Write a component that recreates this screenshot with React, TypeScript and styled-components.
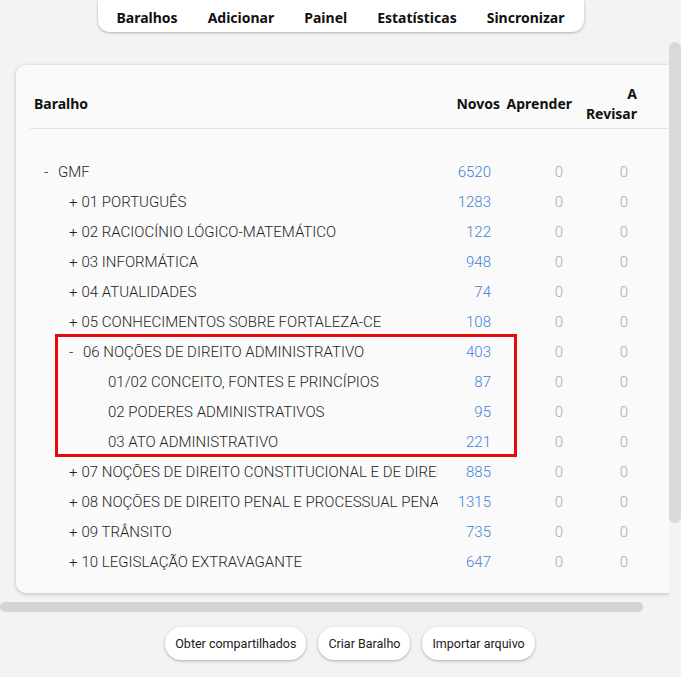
import React from "react";
import styled, { createGlobalStyle } from "styled-components";

type Deck = {
  name: string;
  depth: number;
  expander?: "+" | "-";
  novos: number;
  aprender: number;
  revisar: number;
};

const decks: Deck[] = [
  { name: "GMF", depth: 0, expander: "-", novos: 6520, aprender: 0, revisar: 0 },
  { name: "01 PORTUGUÊS", depth: 1, expander: "+", novos: 1283, aprender: 0, revisar: 0 },
  { name: "02 RACIOCÍNIO LÓGICO-MATEMÁTICO", depth: 1, expander: "+", novos: 122, aprender: 0, revisar: 0 },
  { name: "03 INFORMÁTICA", depth: 1, expander: "+", novos: 948, aprender: 0, revisar: 0 },
  { name: "04 ATUALIDADES", depth: 1, expander: "+", novos: 74, aprender: 0, revisar: 0 },
  { name: "05 CONHECIMENTOS SOBRE FORTALEZA-CE", depth: 1, expander: "+", novos: 108, aprender: 0, revisar: 0 },
];

const highlighted: Deck[] = [
  { name: "06 NOÇÕES DE DIREITO ADMINISTRATIVO", depth: 1, expander: "-", novos: 403, aprender: 0, revisar: 0 },
  { name: "01/02 CONCEITO, FONTES E PRINCÍPIOS", depth: 2, novos: 87, aprender: 0, revisar: 0 },
  { name: "02 PODERES ADMINISTRATIVOS", depth: 2, novos: 95, aprender: 0, revisar: 0 },
  { name: "03 ATO ADMINISTRATIVO", depth: 2, novos: 221, aprender: 0, revisar: 0 },
];

const rest: Deck[] = [
  { name: "07 NOÇÕES DE DIREITO CONSTITUCIONAL E DE DIREITOS HUMANOS", depth: 1, expander: "+", novos: 885, aprender: 0, revisar: 0 },
  { name: "08 NOÇÕES DE DIREITO PENAL E PROCESSUAL PENAL", depth: 1, expander: "+", novos: 1315, aprender: 0, revisar: 0 },
  { name: "09 TRÂNSITO", depth: 1, expander: "+", novos: 735, aprender: 0, revisar: 0 },
  { name: "10 LEGISLAÇÃO EXTRAVAGANTE", depth: 1, expander: "+", novos: 647, aprender: 0, revisar: 0 },
];

const GlobalStyle = createGlobalStyle`
  html, body {
    margin: 0;
    padding: 0;
    height: 100%;
    overflow: hidden;
    background: #f3f3f3;
  }
  body {
    font-family: "Noto Sans", "Liberation Sans", sans-serif;
    color: #1a1a1a;
  }
`;

const Page = styled.div`
  display: flex;
  height: 100vh;
  overflow: hidden;
`;

const Main = styled.main`
  flex: 1;
  min-width: 0;
  display: flex;
  flex-direction: column;
  overflow: hidden;
`;

// the window's vertical scrollbar, drawn (the browser hides real ones)
const ScrollRail = styled.div`
  width: 12px;
  flex-shrink: 0;
`;

const RailThumb = styled.div`
  margin-top: 42px;
  height: 481px;
  border-radius: 6px;
  background: #d9d9d9;
`;

const Nav = styled.nav`
  align-self: center;
  display: flex;
  align-items: center;
  gap: 30px;
  height: 32px;
  padding: 2px 19px 0;
  margin-left: 12px;
  box-sizing: border-box;
  background: #ffffff;
  border-radius: 0 0 12px 12px;
  box-shadow: 0 1px 3px rgba(0, 0, 0, 0.28);
`;

const NavItem = styled.a`
  font-weight: 700;
  font-size: 14px;
  color: #111;
  text-decoration: none;
  white-space: nowrap;
`;

const DeckArea = styled.div`
  margin-top: 25px;
  padding: 8px 0 5px 16px;
  overflow: hidden;
`;

const Card = styled.div`
  width: 680px;
  box-sizing: border-box;
  padding: 14px 14px 16px;
  background: #fafafa;
  border-radius: 10px;
  box-shadow: 0 1px 4px rgba(0, 0, 0, 0.22);
`;

const HScrollTrack = styled.div`
  margin-top: 4px;
  height: 10px;
`;

const HScrollThumb = styled.div`
  width: 643px;
  height: 100%;
  border-radius: 5px;
  background: #d4d4d4;
`;

const columns = "408px 65px 72px 65px 1fr";

const HeaderRow = styled.div`
  display: grid;
  grid-template-columns: ${columns};
  align-items: center;
  height: 49px;
  border-bottom: 1px solid #e4e4e4;
`;

const HeadCell = styled.div<{ $right?: boolean }>`
  font-weight: 700;
  font-size: 14px;
  line-height: 20px;
  color: #111;
  white-space: nowrap;
  text-align: ${(p) => (p.$right ? "right" : "left")};
  padding: ${(p) => (p.$right ? "0 3px 0 0" : "0 0 0 4px")};
`;

const Body = styled.div`
  padding-top: 28px;
`;

const Row = styled.div`
  display: grid;
  grid-template-columns: ${columns};
  align-items: center;
  height: 30px;
  font-family: Roboto, "Liberation Sans", sans-serif;
  font-weight: 300;
  font-size: 15px;
`;

const NameCell = styled.div<{ $depth: number }>`
  overflow: hidden;
  white-space: nowrap;
  padding-left: ${(p) => 14 + p.$depth * 25}px;
  color: #1e1e1e;
`;

const Expander = styled.span<{ $wide?: boolean }>`
  display: inline-block;
  width: ${(p) => (p.$wide ? 14 : 12.5)}px;
`;

const Count = styled.div<{ $blue?: boolean }>`
  text-align: right;
  padding-right: 12px;
  color: ${(p) => (p.$blue ? "#3f82d9" : "#ababab")};
`;

// red annotation drawn over the "06" group
const Highlight = styled.div`
  position: relative;

  &::after {
    content: "";
    position: absolute;
    left: 25px;
    top: -3px;
    width: 462px;
    bottom: 0;
    border: 3px solid #e20a0a;
    box-sizing: border-box;
    pointer-events: none;
  }
`;

const Actions = styled.div`
  display: flex;
  justify-content: center;
  gap: 12px;
  margin-top: 15px;
  padding-left: 31px;
`;

const ActionButton = styled.button`
  height: 33px;
  padding: 0 10px;
  border: none;
  border-radius: 16px;
  background: #ffffff;
  box-shadow: 0 1px 3px rgba(0, 0, 0, 0.3);
  font-family: Roboto, "Liberation Sans", sans-serif;
  font-size: 12.5px;
  color: #1a1a1a;
  white-space: nowrap;
  cursor: pointer;
`;

const DeckRow: React.FC<{ deck: Deck }> = ({ deck }) => (
  <Row>
    <NameCell $depth={deck.depth}>
      <Expander $wide={deck.expander !== "+"}>{deck.expander ?? ""}</Expander>
      {deck.name}
    </NameCell>
    <Count $blue={deck.novos > 0}>{deck.novos}</Count>
    <Count>{deck.aprender}</Count>
    <Count>{deck.revisar}</Count>
  </Row>
);

export default function App() {
  return (
    <>
      <GlobalStyle />
      <Page>
        <Main>
          <Nav>
            <NavItem>Baralhos</NavItem>
            <NavItem>Adicionar</NavItem>
            <NavItem>Painel</NavItem>
            <NavItem>Estatísticas</NavItem>
            <NavItem>Sincronizar</NavItem>
          </Nav>

          <DeckArea>
            <Card>
              <HeaderRow>
                <HeadCell>Baralho</HeadCell>
                <HeadCell $right>Novos</HeadCell>
                <HeadCell $right>Aprender</HeadCell>
                <HeadCell $right>
                  A
                  <br />
                  Revisar
                </HeadCell>
              </HeaderRow>
              <Body>
                {decks.map((d) => (
                  <DeckRow key={d.name} deck={d} />
                ))}
                <Highlight>
                  {highlighted.map((d) => (
                    <DeckRow key={d.name} deck={d} />
                  ))}
                </Highlight>
                {rest.map((d) => (
                  <DeckRow key={d.name} deck={d} />
                ))}
              </Body>
            </Card>
          </DeckArea>

          <HScrollTrack>
            <HScrollThumb />
          </HScrollTrack>

          <Actions>
            <ActionButton>Obter compartilhados</ActionButton>
            <ActionButton>Criar Baralho</ActionButton>
            <ActionButton>Importar arquivo</ActionButton>
          </Actions>
        </Main>
        <ScrollRail>
          <RailThumb />
        </ScrollRail>
      </Page>
    </>
  );
}
